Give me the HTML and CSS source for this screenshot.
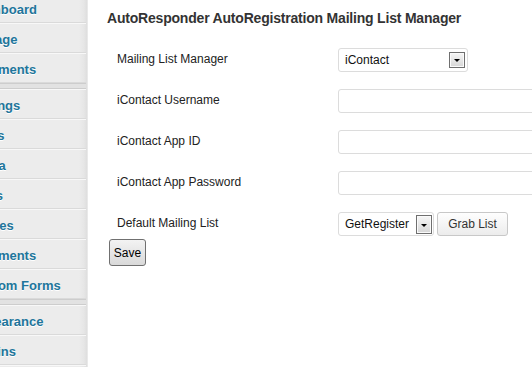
FILE: index.html
```html
<!DOCTYPE html>
<html>
<head>
<meta charset="utf-8">
<link rel="stylesheet" href="styles.css">
</head>
<body>
<div class="page">
  <nav class="sidebar">
    <ul class="menu">
      <li class="item">Dashboard</li>
      <li class="item">Manage</li>
      <li class="item">Comments</li>
      <li class="sep"></li>
      <li class="item">Settings</li>
      <li class="item">Posts</li>
      <li class="item">Media</li>
      <li class="item">Links</li>
      <li class="item">Quotes</li>
      <li class="item">Comments</li>
      <li class="item">Custom Forms</li>
      <li class="sep"></li>
      <li class="item">Appearance</li>
      <li class="item">Plugins</li>
      <li class="item">Users</li>
    </ul>
  </nav>
  <main class="content">
    <h2 class="title">AutoResponder AutoRegistration Mailing List Manager</h2>
    <form class="form">
      <label class="label">Mailing List Manager</label>
      <div class="field">
        <div class="select select-wide"><span class="select-text">iContact</span><span class="arrow"></span></div>
      </div>
      <label class="label">iContact Username</label>
      <div class="field"><input class="input" type="text"></div>
      <label class="label">iContact App ID</label>
      <div class="field"><input class="input" type="text"></div>
      <label class="label">iContact App Password</label>
      <div class="field"><input class="input" type="password"></div>
      <label class="label">Default Mailing List</label>
      <div class="field field-inline">
        <div class="select select-list"><span class="select-text">GetRegister</span><span class="arrow arrow-tall"></span></div>
        <button class="btn grab" type="button">Grab List</button>
      </div>
    </form>
    <button class="btn save" type="button">Save</button>
  </main>
</div>
</body>
</html>
```
FILE: styles.css
```css
html, body {
  margin: 0;
  padding: 0;
  width: 532px;
  height: 367px;
  overflow: hidden;
  background: #fff;
  font-family: "Liberation Sans", Arial, sans-serif;
}

.page {
  display: flex;
  height: 367px;
}

.sidebar {
  width: 88px;
  flex: none;
  overflow: hidden;
  background: linear-gradient(to right, #ececec 0, #ececec 79px, #e6e6e6 84px, #dedede 87px, #f4f4f4 88px);
}

.menu {
  list-style: none;
  margin: -7px 0 0;
  padding: 0;
}

.item {
  box-sizing: border-box;
  height: 30px;
  margin-right: 2px;
  padding-top: 3px;
  border-top: 1px solid #f8f8f8;
  border-bottom: 1px solid #dadada;
  font-weight: bold;
  font-size: 13px;
  line-height: 26px;
  color: #21759b;
  white-space: nowrap;
  text-indent: -31px;
  text-shadow: 0 1px 0 #fff;
}

.sep {
  height: 4px;
  margin-right: 2px;
  border-top: 1px solid #cdcdcd;
  border-bottom: 1px solid #cdcdcd;
  background: #e2e2e2;
}

.content {
  flex: 1;
  padding-left: 19px;
  min-width: 0;
}

.title {
  margin: 0;
  padding-top: 8px;
  font-weight: bold;
  font-size: 14px;
  letter-spacing: -0.2px;
  line-height: 20px;
  color: #333;
  white-space: nowrap;
}

.form {
  margin: 20px 0 0;
  padding-left: 10px;
  display: grid;
  grid-template-columns: 221px 1fr;
  row-gap: 17px;
  align-items: center;
}

.label {
  padding-bottom: 3px;
  font-size: 12px;
  color: #222;
  white-space: nowrap;
}

.field {
  height: 24px;
  display: flex;
  align-items: center;
}

.field-inline {
  gap: 3px;
}

.select {
  box-sizing: border-box;
  height: 24px;
  border: 1px solid #dcdcdc;
  border-radius: 3px;
  background: #fff;
  display: flex;
  align-items: center;
  justify-content: space-between;
  padding: 0 2px 0 6px;
  font-size: 12px;
  color: #111;
}

.select-wide {
  width: 130px;
}

.select-list {
  width: 96px;
  padding-right: 1px;
}

.arrow {
  box-sizing: border-box;
  width: 16px;
  height: 16px;
  border: 1px solid #6f6f6f;
  background: linear-gradient(#f6f6f6, #d6d6d6);
  box-shadow: inset 0 0 0 1px #fafafa;
  position: relative;
}

.arrow::after {
  content: "";
  position: absolute;
  left: 4px;
  top: 6px;
  border-left: 3px solid transparent;
  border-right: 3px solid transparent;
  border-top: 3px solid #000;
}

.arrow-tall {
  height: 19px;
}

.arrow-tall::after {
  top: 8px;
}

.input {
  box-sizing: border-box;
  width: 220px;
  height: 24px;
  margin: 0;
  border: 1px solid #dcdcdc;
  border-radius: 3px;
  background: #fff;
  outline: none;
}

.btn {
  box-sizing: border-box;
  margin: 0;
  font-family: "Liberation Sans", Arial, sans-serif;
  font-size: 12px;
  border-radius: 3px;
  cursor: pointer;
}

.grab {
  width: 71px;
  height: 24px;
  padding: 0;
  border: 1px solid #c8c8c8;
  background: linear-gradient(#fefefe, #ececec);
  color: #333;
}

.save {
  margin: 3px 0 0 2px;
  width: 37px;
  height: 27px;
  padding: 0;
  border: 1px solid #707070;
  background: linear-gradient(#f3f3f3, #d9d9d9);
  color: #000;
}
```
